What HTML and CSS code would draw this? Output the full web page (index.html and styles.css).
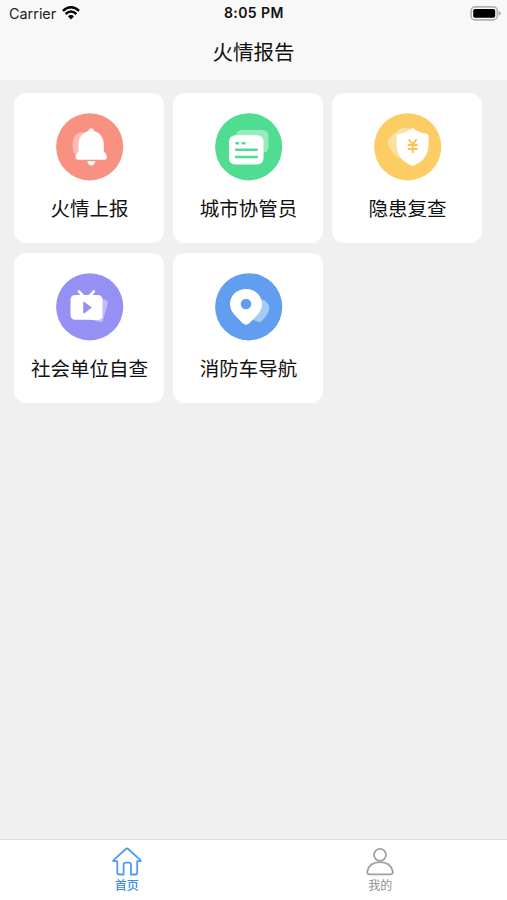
FILE: index.html
```html
<!DOCTYPE html>
<html lang="zh-CN">
<head>
<meta charset="utf-8">
<title>火情报告</title>
<link rel="stylesheet" href="styles.css">
</head>
<body>
<header class="header">
  <div class="status">
    <div class="carrier"><span>Carrier</span>
      <svg class="wifi" width="18" height="14" viewBox="0 0 18 14"><g fill="none" stroke="#000" stroke-width="2.4"><path d="M.9 4.9Q9-2.4 17.1 4.9"/><path d="M3.6 8Q9 3.2 14.4 8"/></g><path d="M5.9 10.2Q9 7.6 12.1 10.2L9 13.5Z"/></svg>
    </div>
    <time class="clock">8:05 PM</time>
    <svg class="battery" width="31" height="15" viewBox="0 0 31 15"><rect x="1.1" y=".9" width="26.2" height="13" rx="4" fill="#fafafa" stroke="#b2b2b2" stroke-width="1.6"/><rect x="3.2" y="3" width="22" height="8.8" rx="1.8"/><path d="M28.7 5Q30.7 5.4 30.7 7.3T28.7 9.6Z" fill="#a5a5a5"/></svg>
  </div>
  <h1 class="title">火情报告</h1>
</header>
<main class="grid">
  <a class="card">
    <svg class="icon" viewBox="6 8 69 68"><circle cx="40.7" cy="41.8" r="33.6" fill="#f99180"/><path d="M34 27C27 27 23.5 33 23.5 39.5C23.5 45 24.5 48 27 51H36Z" fill="#fff" opacity=".4"/><path d="M42.3 23.3C43.8 23.3 44.7 24.3 45 26C51 27.6 54.5 32.5 54.8 39V46.5L57.3 49.5Q59 54.7 55.5 54.7H29Q25.5 54.7 27 49.5L29.5 46.5V39C29.7 32.5 33.5 27.6 39.4 26C39.8 24.3 40.8 23.3 42.3 23.3ZM38.2 56.2H46.5Q45.4 60.4 42.4 60.4T38.2 56.2Z" fill="#fff"/></svg>
    <span class="label">火情上报</span>
  </a>
  <a class="card">
    <svg class="icon" viewBox="6 8 69 68"><circle cx="40.7" cy="41.8" r="33.6" fill="#50dc91"/><rect x="28" y="25" width="32.5" height="23" rx="6" fill="#fff" opacity=".42"/><rect x="21" y="30.2" width="34.5" height="29.2" rx="6" fill="#fff"/><path d="M28.4 38.3H30M34.5 38.3H36.5M28 44.7H48.8M28 52H48.8" fill="none" stroke="#50dc91" stroke-width="2.4" stroke-linecap="round"/></svg>
    <span class="label">城市协管员</span>
  </a>
  <a class="card">
    <svg class="icon" viewBox="6 8 69 68"><circle cx="40.7" cy="41.8" r="33.6" fill="#fbcd64"/><path d="M37 23Q33 23 29 27Q19.5 34.5 20.5 37Q25 53 40 56L47 24Z" fill="#fff" opacity=".38"/><path d="M45.7 23Q51.5 27.5 59.7 28.8Q61.6 29 61.6 31V40C61.3 51 55 57.4 45.7 61C36.3 57.4 30 51 29.7 40V31Q29.7 29 31.7 28.8Q39.5 27.5 45.7 23Z" fill="#fff"/><path d="M41.8 34.4L45.7 39.4L49.6 34.4M40.8 40H50.6M40.8 44H50.6M45.7 39V48" fill="none" stroke="#fac34e" stroke-width="1.9"/></svg>
    <span class="label">隐患复查</span>
  </a>
  <a class="card">
    <svg class="icon" viewBox="6 8 69 68"><circle cx="40.7" cy="41.8" r="33.6" fill="#9690f5"/><path d="M52 33.5L57 35Q59.5 36 58.7 39L54 55.5Q53.4 57.7 50.5 57L40 54Z" fill="#fff" opacity=".4"/><path d="M30 26.5L34.2 31M44.8 26.5L40.6 31" stroke="#fff" stroke-width="2.6" stroke-linecap="round"/><path d="M26.5 30H48.5Q53.5 30 53.5 35V51Q53.5 55 48.5 55C44 55.3 41 54.7 38 54.7H26.5Q21.5 54.7 21.5 49.7V35Q21.5 30 26.5 30Z" fill="#fff"/><path d="M34.2 37.5Q34.2 36.3 35.4 37L42 41.8Q43.2 42.5 42 43.3L35.4 48.3Q34.2 49 34.2 47.6Z" fill="#9690f5"/></svg>
    <span class="label">社会单位自查</span>
  </a>
  <a class="card">
    <svg class="icon" viewBox="6 8 69 68"><circle cx="40.7" cy="41.8" r="33.6" fill="#619ef0"/><path d="M53 34C58 35.5 61.5 39 61.3 43.5C61 48 57.5 51.5 54 56Q52.3 57.8 49.5 56.7L42 53Z" fill="#fff" opacity=".45"/><path d="M38 24C47 24 54 30.5 54 39.3C54 46.5 48.5 51 41.5 58Q38 61.5 34.5 58C27.5 51 22 46.5 22 39.3C22 30.5 29 24 38 24Z" fill="#fff"/><circle cx="38" cy="39" r="5.3" fill="#619ef0"/></svg>
    <span class="label">消防车导航</span>
  </a>
</main>
<nav class="tabs">
  <a class="tab active"><svg width="32" height="30" viewBox="0 0 32 30"><path d="M6.3 14.2H3.3Q1.3 14.2 2.8 12.8L14.8 2Q16 1 17.2 2L29.2 12.8Q30.6 14.2 28.7 14.2H26.2V25.5Q26.2 27.5 24.2 27.5H20V17.7Q20 15.7 18 15.7H14.6Q12.6 15.7 12.6 17.7V27.5H8.3Q6.3 27.5 6.3 25.5Z"/></svg><span>首页</span></a>
  <a class="tab"><svg width="32" height="30" viewBox="0 0 32 30"><circle cx="16" cy="7.8" r="6"/><path d="M5.5 27.3H26.8Q29.2 27.3 28.7 24.5C27.5 18.5 22.5 15.2 16 15.2S4.5 18.5 3.3 24.5Q2.8 27.3 5.5 27.3Z"/></svg><span>我的</span></a>
</nav>
</body>
</html>
```
FILE: styles.css
```css
* { box-sizing: border-box; }
body {
  margin: 0;
  height: 900px;
  display: flex;
  flex-direction: column;
  background: #f0f0f0;
  color: #111;
  font-family: Inter, "Noto Sans CJK SC", sans-serif;
}
.header { height: 80px; background: #f8f8f8; }
.status {
  height: 28px;
  padding: 0 6px 0 9px;
  display: grid;
  grid-template-columns: 1fr 60px 1fr;
  align-items: center;
}
.carrier { display: flex; align-items: center; gap: 6px; font-size: 14.4px; line-height: 28px; color: #222; }
.carrier span { width: 47px; white-space: nowrap; }
.wifi { margin-bottom: 2px; }
.clock { font-size: 14px; line-height: 18px; font-weight: 600; letter-spacing: .4px; white-space: nowrap; margin: 0 0 2px -1px; }
.battery { justify-self: end; margin-bottom: 1px; }
.title { margin: 0; text-align: center; font-size: 20.5px; font-weight: 400; line-height: 50px; }
.grid {
  flex: 1;
  display: grid;
  grid-template-columns: repeat(3, 150px);
  grid-auto-rows: 150px;
  align-content: start;
  gap: 10px 9px;
  padding: 12.5px 14.4px;
}
.card {
  display: flex;
  flex-direction: column;
  align-items: center;
  padding-top: 20px;
  border-radius: 12px;
  background: #fff;
}
.icon { width: 69px; height: 68px; }
.label { margin-top: 14px; font-size: 19.5px; line-height: 28px; white-space: nowrap; }
.tabs {
  height: 61.5px;
  display: flex;
  border-top: 1.5px solid #dedede;
  background: #fff;
}
.tab {
  flex: 1;
  display: flex;
  flex-direction: column;
  align-items: center;
  padding-top: 7px;
  color: #8e8e8e;
  font-size: 12px;
  line-height: 18px;
}
.tab svg { fill: none; stroke: #a0a0a0; stroke-width: 1.8; stroke-linejoin: round; }
.active { color: #3c8ae8; font-weight: 500; }
.active svg { stroke: #4d9bf5; }
```
